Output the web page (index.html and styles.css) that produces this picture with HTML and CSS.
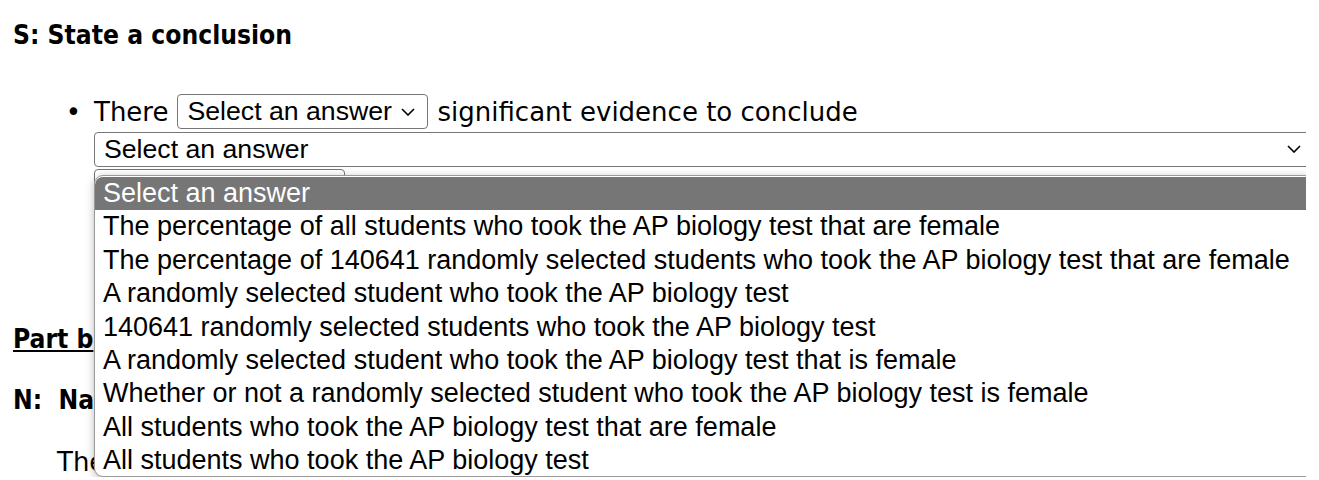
FILE: index.html
```html
<!DOCTYPE html>
<html lang="en">
<head>
    <meta charset="UTF-8">
    <title>Hypothesis test - Part a</title>
    <link rel="stylesheet" href="styles.css">
</head>
<body>
    <div class="question">
        <h3 class="step first">S: State a conclusion</h3>
        <ul class="answers">
            <li>
                <div class="line">
                    <span>There</span>
                    <span class="select short">Select an answer
                        <svg class="chevron" viewBox="0 0 14 8"><path d="M1 1l6 6 6-6"/></svg>
                    </span>
                    <span>significant evidence to conclude</span>
                    <span class="select wide">Select an answer
                        <svg class="chevron" viewBox="0 0 14 8"><path d="M1 1l6 6 6-6"/></svg>
                    </span>
                    <span class="select short">Select an answer
                        <svg class="chevron" viewBox="0 0 14 8"><path d="M1 1l6 6 6-6"/></svg>
                    </span>
                </div>
            </li>
        </ul>

        <h3 class="part">Part b</h3>
        <h3 class="step">N:&nbsp; Name the test</h3>
        <p class="indent">The test</p>

        <div class="popup">
            <div class="option selected">Select an answer</div>
            <div class="option">The percentage of all students who took the AP biology test that are female</div>
            <div class="option">The percentage of 140641 randomly selected students who took the AP biology test that are female</div>
            <div class="option">A randomly selected student who took the AP biology test</div>
            <div class="option">140641 randomly selected students who took the AP biology test</div>
            <div class="option">A randomly selected student who took the AP biology test that is female</div>
            <div class="option">Whether or not a randomly selected student who took the AP biology test is female</div>
            <div class="option">All students who took the AP biology test that are female</div>
            <div class="option">All students who took the AP biology test</div>
        </div>
    </div>
</body>
</html>
```

FILE: styles.css
```css
* {
    box-sizing: border-box;
}

body {
    margin: 13px 13px 0 13px;
    font-family: "DejaVu Sans", sans-serif;
    font-size: 26px;
    color: #000;
    background-color: #fff;
}
.question {
    position: relative;
    padding-top: 8px;
}
h3 {
    font-family: "DejaVu Sans Condensed", "DejaVu Sans", sans-serif;
    font-size: 26.2px;
    font-weight: bold;
    margin: 0;
}
.step {
    margin-top: 8px;
    line-height: 28px;
}
.step.first {
    margin-top: 0;
}
.answers {
    margin: 45px 0 0 0;
    padding-left: 81px;
}
.answers li::marker {
    content: "\2022\2002";
}
.line {
    display: flex;
    flex-wrap: wrap;
    align-items: center;
    column-gap: 9px;
    row-gap: 2.5px;
    width: 1220px;
}
.select {
    display: inline-flex;
    align-items: center;
    justify-content: space-between;
    height: 35px;
    padding: 0 12px 0 9px;
    font-family: "Liberation Sans", Arial, sans-serif;
    font-size: 26.67px;
    border: 1.5px solid #767676;
    border-radius: 4px;
    background-color: #fff;
    white-space: nowrap;
}
.select.short {
    width: 251px;
}
.select.wide {
    width: 1220px;
}
.chevron {
    width: 14px;
    height: 8px;
    fill: none;
    stroke: #000;
    stroke-width: 1.6;
}
.part {
    margin-top: 120px;
    text-decoration: underline;
}
.part + .step {
    margin-top: 32px;
}
.indent {
    margin: 33px 0 0 44px;
    line-height: 30px;
}
.popup {
    position: absolute;
    left: 81px;
    top: 162px;
    width: 1220px;
    height: 302px;
    padding-top: 1px;
    font-family: "Liberation Sans", Arial, sans-serif;
    font-size: 27px;
    background-color: #fff;
    border: 1.5px solid #9a9a9a;
    border-radius: 9px;
    box-shadow: 0 2px 9px rgba(0, 0, 0, 0.28);
    overflow: hidden;
}
.option {
    height: 33.4px;
    line-height: 33.4px;
    padding: 0 8px;
    white-space: nowrap;
}
.option.selected {
    color: #fff;
    background-color: #767676;
    border-radius: 8px 8px 0 0;
}
```
